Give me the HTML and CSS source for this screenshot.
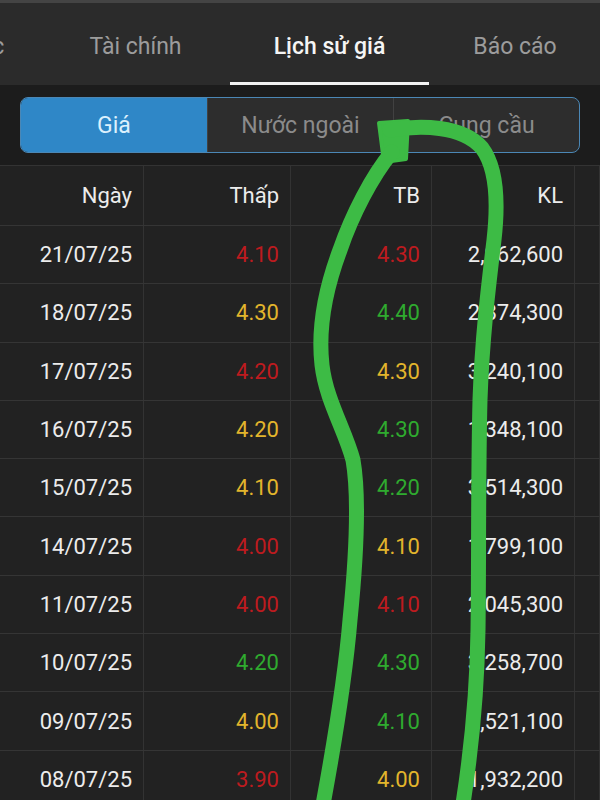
FILE: index.html
```html
<!DOCTYPE html>
<html lang="vi">
<head>
    <meta charset="UTF-8">
    <meta name="viewport" content="width=device-width, initial-scale=1.0">
    <title>Lịch sử giá</title>
    <link rel="stylesheet" href="styles.css">
</head>
<body>
<div class="screen">
    <nav class="tabs">
        <div class="tab tab-cut">Tin tức</div>
        <div class="tab tab-finance">Tài chính</div>
        <div class="tab tab-history active">Lịch sử giá</div>
        <div class="tab tab-report">Báo cáo</div>
    </nav>

    <div class="segment-bar">
        <div class="segments">
            <div class="segment selected">Giá</div>
            <div class="segment">Nước ngoài</div>
            <div class="segment">Cung cầu</div>
        </div>
    </div>

    <div class="price-table">
        <div class="row head">
            <div class="cell">Ngày</div>
            <div class="cell">Thấp</div>
            <div class="cell">TB</div>
            <div class="cell">KL</div>
            <div class="cell"></div>
        </div>
        <div id="priceRows"></div>
    </div>

    <svg class="marker" viewBox="0 0 600 800" width="600" height="800">
        <path class="marker-blob" d="M379 123 L408 121 L406 159 L384 162 Z"/>
        <path d="M390 130 C420 125, 462 125, 482 148 C497 168, 498 205, 494 240 C488 290, 482 340, 480 400 C478 480, 479 560, 478 630 C477 700, 470 760, 462 810"/>
        <path d="M392 152 C372 176, 352 215, 340 250 C325 290, 318 330, 322 365 C326 400, 345 430, 353 460 C360 500, 356 560, 350 620 C345 680, 335 740, 322 810"/>
    </svg>
</div>

<script>
    const prices = [
        ['21/07/25', '4.10', 'down', '4.30', 'down', '2,962,600'],
        ['18/07/25', '4.30', 'ref', '4.40', 'up', '2,874,300'],
        ['17/07/25', '4.20', 'down', '4.30', 'ref', '3,240,100'],
        ['16/07/25', '4.20', 'ref', '4.30', 'up', '1,348,100'],
        ['15/07/25', '4.10', 'ref', '4.20', 'up', '3,514,300'],
        ['14/07/25', '4.00', 'down', '4.10', 'ref', '1,799,100'],
        ['11/07/25', '4.00', 'down', '4.10', 'down', '2,045,300'],
        ['10/07/25', '4.20', 'up', '4.30', 'up', '3,258,700'],
        ['09/07/25', '4.00', 'ref', '4.10', 'up', '3,521,100'],
        ['08/07/25', '3.90', 'down', '4.00', 'ref', '1,932,200']
    ];

    const rowsBox = document.getElementById('priceRows');
    prices.forEach(p => {
        const row = document.createElement('div');
        row.className = 'row';
        row.innerHTML = `
    <div class="cell">${p[0]}</div>
    <div class="cell ${p[2]}">${p[1]}</div>
    <div class="cell ${p[4]}">${p[3]}</div>
    <div class="cell">${p[5]}</div>
    <div class="cell"></div>
`;
        rowsBox.appendChild(row);
    });
</script>
</body>
</html>
```

FILE: styles.css
```css
body {
    margin: 0;
    background-color: #1d1d1d;
    font-family: Roboto, "Noto Sans", sans-serif;
    overflow: hidden;
}

.screen {
    position: relative;
    width: 600px;
    height: 800px;
    overflow: hidden;
}

/* top tabs */
.tabs {
    display: flex;
    height: 85px;
    box-sizing: border-box;
    border-top: 3px solid #444444;
    background-color: #2b2b2b;
}

.tab {
    flex: none;
    display: flex;
    align-items: center;
    justify-content: center;
    box-sizing: border-box;
    padding-top: 8px;
    border-bottom: 3px solid transparent;
    font-size: 23px;
    color: #9c9c9c;
    white-space: nowrap;
}

.tab-cut {
    width: 145px;
    margin-left: -104px;
}

.tab-finance {
    width: 189px;
}

.tab-history {
    width: 199px;
}

.tab-report {
    width: 172px;
}

.tab.active {
    color: #f5f5f5;
    font-weight: 500;
    border-bottom-color: #f2f2f2;
}

/* segmented control */
.segment-bar {
    padding: 12px 20px;
    background-color: #1c1c1c;
}

.segments {
    display: grid;
    grid-template-columns: 1fr 1fr 1fr;
    height: 56px;
    box-sizing: border-box;
    border: 1px solid #4b87b5;
    border-radius: 8px;
    overflow: hidden;
    background-color: #2d2d2d;
}

.segment {
    display: flex;
    align-items: center;
    justify-content: center;
    font-size: 23px;
    color: #8b8b8b;
}

.segment + .segment {
    border-left: 1px solid #414141;
}

.segment.selected {
    background-color: #2f87c7;
    color: #dcf0fd;
}

/* price table */
.price-table {
    border-top: 1px solid #333333;
    background-color: #222222;
}

.row {
    display: grid;
    grid-template-columns: 144px 147px 141px 143px 1fr;
    height: 58.3px;
    box-sizing: border-box;
    border-bottom: 1px solid #353535;
}

.row.head {
    height: 60px;
}

.cell {
    display: flex;
    align-items: center;
    justify-content: flex-end;
    padding-right: 11px;
    border-right: 1px solid #333333;
    font-size: 22px;
    color: #ececec;
}

.down {
    color: #bd1b1f;
}

.ref {
    color: #e2b52c;
}

.up {
    color: #2fab2f;
}

/* hand-drawn highlight over the screenshot */
.marker {
    position: absolute;
    top: 0;
    left: 0;
    pointer-events: none;
}

.marker path {
    fill: none;
    stroke: #3dbb45;
    stroke-width: 15;
    stroke-linecap: round;
    stroke-linejoin: round;
}

.marker .marker-blob {
    fill: #3dbb45;
    stroke-width: 4;
}
```
